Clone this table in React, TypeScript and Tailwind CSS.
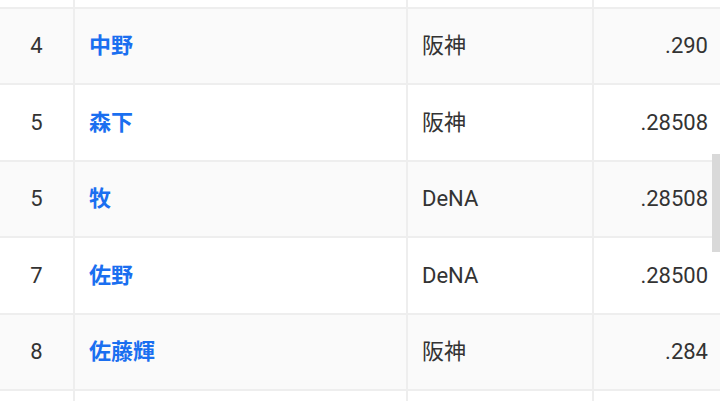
import React from "react";

const rows = [
  { rank: "4", name: "中野", team: "阪神", avg: ".290", gray: true },
  { rank: "5", name: "森下", team: "阪神", avg: ".28508", gray: false },
  { rank: "5", name: "牧", team: "DeNA", avg: ".28508", gray: true },
  { rank: "7", name: "佐野", team: "DeNA", avg: ".28500", gray: false },
  { rank: "8", name: "佐藤輝", team: "阪神", avg: ".284", gray: true },
];

const font = { fontFamily: 'Roboto, "Noto Sans CJK JP", sans-serif' };

function Row({ r, h, children }: { r?: (typeof rows)[number]; h: string; children?: React.ReactNode }) {
  return (
    <div
      className={`grid grid-cols-[75px_333px_186px_1fr] border-b-2 border-[#eeeeee] ${h} ${r && r.gray ? "bg-[#fafafa]" : "bg-white"}`}
    >
      {children}
    </div>
  );
}

export default function App() {
  return (
    <div className="relative w-[720px] h-[401px] overflow-hidden bg-white text-[22px] text-[#333333]" style={font}>
      <div className="flex flex-col">
        <div className="grid grid-cols-[75px_333px_186px_1fr] border-b-2 border-[#eeeeee] h-[8.5px] bg-white">
          <div className="border-r-2 border-[#eeeeee]" />
          <div className="border-r-2 border-[#eeeeee]" />
          <div className="border-r-2 border-[#eeeeee]" />
          <div />
        </div>
        {rows.map((r, i) => (
          <Row key={i} r={r} h="h-[76.5px]">
            <div className="border-r-2 border-[#eeeeee] flex items-center justify-center">{r.rank}</div>
            <div className="border-r-2 border-[#eeeeee] flex items-center pl-[14px] font-bold text-[#1a6ff0]">{r.name}</div>
            <div className="border-r-2 border-[#eeeeee] flex items-center pl-[14px]">{r.team}</div>
            <div className="flex items-center justify-end pr-[12px]">{r.avg}</div>
          </Row>
        ))}
        <div className="grid grid-cols-[75px_333px_186px_1fr] h-[40px] bg-white">
          <div className="border-r-2 border-[#eeeeee]" />
          <div className="border-r-2 border-[#eeeeee]" />
          <div className="border-r-2 border-[#eeeeee]" />
          <div />
        </div>
      </div>
      <div className="absolute right-0 top-[154px] w-[8px] h-[98px] bg-[#d9d9d9]" />
    </div>
  );
}
